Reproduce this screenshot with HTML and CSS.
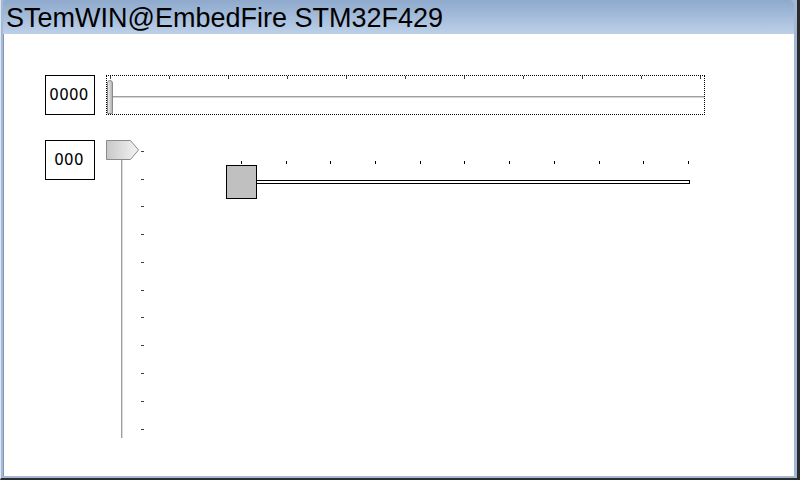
FILE: index.html
```html
<!DOCTYPE html>
<html>
<head>
<meta charset="utf-8">
<link rel="stylesheet" href="styles.css">
</head>
<body>
<div class="frame">
  <div class="titlebar">STemWIN@EmbedFire STM32F429</div>
  <div class="client">
    <div class="row row1">
      <div class="edit">0000</div>
      <div class="hslider1">
        <div class="ticks1"><i></i><i></i><i></i><i></i><i></i><i></i><i></i><i></i><i></i><i></i><i></i></div>
        <div class="track1"><div class="thumb1"></div><div class="shaft1"></div></div>
      </div>
    </div>
    <div class="row row2">
      <div class="edit">000</div>
      <svg class="vslider" width="40" height="300" viewBox="0 0 40 300">
        <defs>
          <linearGradient id="vg" x1="0" y1="0" x2="1" y2="0">
            <stop offset="0" stop-color="#c8c8c8"/>
            <stop offset="1" stop-color="#f4f4f4"/>
          </linearGradient>
        </defs>
        <rect x="15" y="20" width="1" height="278" fill="#a0a0a0"/>
        <rect x="16" y="20" width="1" height="278" fill="#d8d8d8"/>
        <g fill="#404040">
          <rect x="35" y="11" width="3" height="1"/>
          <rect x="35" y="39" width="3" height="1"/>
          <rect x="35" y="66" width="3" height="1"/>
          <rect x="35" y="94" width="3" height="1"/>
          <rect x="35" y="122" width="3" height="1"/>
          <rect x="35" y="150" width="3" height="1"/>
          <rect x="35" y="177" width="3" height="1"/>
          <rect x="35" y="205" width="3" height="1"/>
          <rect x="35" y="233" width="3" height="1"/>
          <rect x="35" y="261" width="3" height="1"/>
          <rect x="35" y="289" width="3" height="1"/>
        </g>
        <polygon points="0.5,0.5 24.5,0.5 32.5,10 24.5,19.5 0.5,19.5" fill="url(#vg)" stroke="#8a8a8a" stroke-width="1"/>
      </svg>
      <div class="hslider2">
        <div class="ticks2"><i></i><i></i><i></i><i></i><i></i><i></i><i></i><i></i><i></i><i></i><i></i></div>
        <div class="track2"><div class="thumb2"></div><div class="shaft2"></div></div>
      </div>
    </div>
  </div>
</div>
</body>
</html>
```
FILE: styles.css
```css
* { box-sizing: border-box; }
html, body { margin: 0; padding: 0; background: #ffffff; }
.frame {
  width: 800px;
  height: 480px;
  background: #a3b9d5;
  border-left: 1px solid #dfe6ef;
  border-right: 3px solid #2c2c2c;
  border-bottom: 2px solid #2c2c2c;
  padding: 0 3px 2px 2px;
  display: flex;
  flex-direction: column;
}
.titlebar {
  height: 34px;
  padding: 3px 0 0 3px;
  line-height: 30px;
  font-family: "Liberation Sans", Arial, sans-serif;
  font-size: 27px;
  color: #000;
  white-space: nowrap;
  background: linear-gradient(#8ea9cc, #bcd0e9);
  border-top-right-radius: 5px;
  border-top-left-radius: 3px;
}
.client {
  flex: 1;
  background: #ffffff;
  border-left: 1px solid #8196b4;
  display: flex;
  flex-direction: column;
}
.row { display: flex; align-items: flex-start; margin-left: 41px; }
.row1 { margin-top: 41px; gap: 11px; }
.row2 { margin-top: 25px; }
.edit {
  width: 50px;
  height: 40px;
  border: 1px solid #000;
  display: flex;
  align-items: center;
  justify-content: center;
  padding-right: 2px;
  font-family: "DejaVu Sans", sans-serif;
  font-size: 15px;
  letter-spacing: 0.3px;
  color: #000;
}
.hslider1 {
  width: 599px;
  height: 40px;
  border: 1px dotted #000;
  display: flex;
  flex-direction: column;
}
.ticks1 {
  height: 3px;
  padding: 0 3px;
  display: flex;
  justify-content: space-between;
}
.ticks1 i, .ticks2 i { display: block; width: 1px; height: 3px; background: #404040; }
.ticks2 i { background: #000; }
.track1 {
  margin-top: 1px;
  height: 34px;
  display: flex;
  align-items: center;
}
.thumb1 {
  width: 6px;
  height: 34px;
  border: 1px solid #8a8a8a;
  border-radius: 3px 3px 0 0;
  background: linear-gradient(to right, #f0f0f0, #b0b0b0);
}
.shaft1 {
  flex: 1;
  height: 2px;
  margin-top: -1px;
  border-top: 1px solid #a0a0a0;
  border-bottom: 1px solid #d4d4d4;
}
.vslider { display: block; margin-left: 11px; }
.hslider2 {
  width: 464px;
  margin-left: 80px;
  margin-top: 21px;
  display: flex;
  flex-direction: column;
}
.ticks2 {
  height: 3px;
  padding-left: 15px;
  padding-right: 1px;
  display: flex;
  justify-content: space-between;
}
.track2 {
  margin-top: 1px;
  height: 34px;
  display: flex;
  align-items: center;
}
.thumb2 {
  width: 31px;
  height: 34px;
  background: #c0c0c0;
  border: 1px solid #000;
}
.shaft2 {
  flex: 1;
  height: 4px;
  border: 1px solid #000;
  border-left: none;
  background: #fff;
}
```
